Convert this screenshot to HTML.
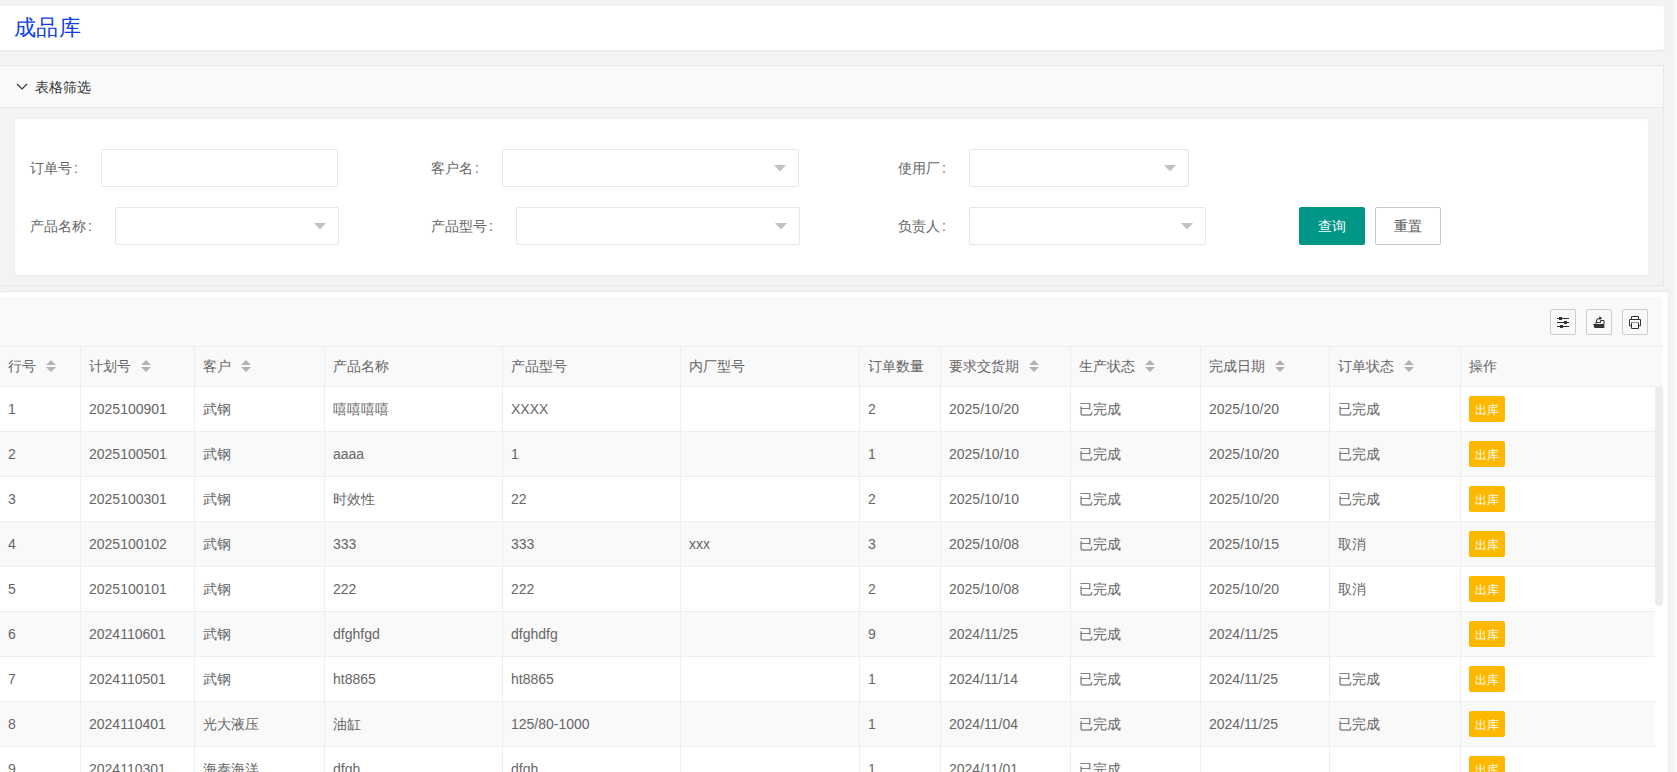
<!DOCTYPE html>
<html><head><meta charset="utf-8">
<style>
*{box-sizing:border-box;margin:0;padding:0}
html,body{width:1677px;height:772px;overflow:hidden}
body{background:#f3f3f3;font-family:"Liberation Sans",sans-serif;font-size:14px;color:#666;position:relative}
.abs{position:absolute}
#hdr{left:0;top:6px;width:1664px;height:44px;background:#fff;border-radius:0 3px 3px 0;box-shadow:0 1px 2px rgba(0,0,0,.06)}
#hdr .t{position:absolute;left:13.5px;top:0;line-height:44px;font-size:22px;letter-spacing:0.6px;color:#0f3ee2}
#fp{left:0;top:65px;width:1664px;height:221px;border:1px solid #e8e8e8;border-left:0;background:#f3f3f3}
#fpt{left:0;top:0;width:1663px;height:42px;background:#f9f9f9;border-bottom:1px solid #e8e8e8}
#fpt .chev{position:absolute;left:16px;top:17px}
#fpt .t{position:absolute;left:35px;top:0;line-height:42px;font-size:14px;color:#333}
#fc{left:15px;top:53px;width:1633px;height:156px;background:#fff;border-radius:3px;box-shadow:0 1px 2px rgba(0,0,0,.05)}
.lbl{position:absolute;font-size:14px;color:#666;line-height:20px}
.inp{position:absolute;height:38px;border:1px solid #e6e6e6;border-radius:2px;background:#fff}
.inp .tri{position:absolute;right:12px;top:15px}
.btn{position:absolute;height:38px;line-height:36px;text-align:center;font-size:14px;border-radius:2px}
#tp{left:0;top:292px;width:1668px;height:490px;background:#fff;border-radius:2px;box-shadow:0 0 0 1px #ebebeb}
#tb{left:0;top:5px;width:1663px;height:49px;background:#f9f9f9}
.tool{position:absolute;top:12px;width:26px;height:26px;border:1px solid #ccc;border-radius:2px;background:#f9f9f9}
.tool svg{position:absolute;left:0;top:0}
.hcell{position:absolute;top:346px;height:41px;line-height:39px;background:#f9f9f9;border-top:1px solid #eee;border-bottom:1px solid #eee;white-space:nowrap;color:#666}
.hcell .sort{position:relative;top:1px;margin-left:10px}
.row{position:absolute;left:0;width:1655px;height:45px;border-bottom:1px solid #eee}
.row.even{background:#f9f9f9}
.vline{position:absolute;width:1px;background:#eee}
.cell{position:absolute;line-height:44px;white-space:nowrap;color:#666}
.colon{margin-left:2px}
.ob{position:absolute;width:36px;height:26px;background:#ffb800;color:#fff;font-size:12px;font-weight:500;line-height:28px;text-align:center;border-radius:2px}
#sb{left:1655px;top:387px;width:8px;height:219px;background:#ececec;border-radius:4px}
#rs1{left:1668px;top:0;width:6px;height:772px;background:#efefef}
#rs2{left:1674px;top:0;width:3px;height:772px;background:#fafafa}
</style></head><body>

<div id="hdr" class="abs"><span class="t">成品库</span></div>
<div id="fp" class="abs"><div id="fpt" class="abs"><svg class="chev" width="12" height="8" viewBox="0 0 12 8"><path d="M1 1L6 6L11 1" stroke="#333" stroke-width="1.2" fill="none"/></svg><span class="t">表格筛选</span></div>
<div id="fc" class="abs">
<span class="lbl" style="left:15px;top:39px">订单号<span class=colon>:</span></span>
<div class="inp" style="left:86px;top:30px;width:237px;height:38px"></div>
<span class="lbl" style="left:416px;top:39px">客户名<span class=colon>:</span></span>
<div class="inp" style="left:487px;top:30px;width:297px;height:38px"><svg class="tri" width="12" height="7" viewBox="0 0 12 7"><path d="M0 0H12L6 6.5Z" fill="#c2c2c2"/></svg></div>
<span class="lbl" style="left:883px;top:39px">使用厂<span class=colon>:</span></span>
<div class="inp" style="left:954px;top:30px;width:220px;height:38px"><svg class="tri" width="12" height="7" viewBox="0 0 12 7"><path d="M0 0H12L6 6.5Z" fill="#c2c2c2"/></svg></div>
<span class="lbl" style="left:15px;top:97px">产品名称<span class=colon>:</span></span>
<div class="inp" style="left:100px;top:88px;width:224px;height:38px"><svg class="tri" width="12" height="7" viewBox="0 0 12 7"><path d="M0 0H12L6 6.5Z" fill="#c2c2c2"/></svg></div>
<span class="lbl" style="left:416px;top:97px">产品型号<span class=colon>:</span></span>
<div class="inp" style="left:501px;top:88px;width:284px;height:38px"><svg class="tri" width="12" height="7" viewBox="0 0 12 7"><path d="M0 0H12L6 6.5Z" fill="#c2c2c2"/></svg></div>
<span class="lbl" style="left:883px;top:97px">负责人<span class=colon>:</span></span>
<div class="inp" style="left:954px;top:88px;width:237px;height:38px"><svg class="tri" width="12" height="7" viewBox="0 0 12 7"><path d="M0 0H12L6 6.5Z" fill="#c2c2c2"/></svg></div>
<div class="btn" style="left:1284px;top:88px;width:66px;background:#009688;color:#fff;line-height:38px">查询</div>
<div class="btn" style="left:1360px;top:88px;width:66px;background:#fff;color:#555;border:1px solid #c9c9c9">重置</div>
</div></div>
<div id="tp" class="abs"><div id="tb" class="abs">
<div class="tool" style="left:1550px"><svg width="24" height="24" viewBox="0 0 24 24"><g stroke="#333" stroke-width="1"><path d="M6 8.5H18M6 12.5H18M6 16.5H18"/></g><g fill="#333"><rect x="8" y="7" width="3" height="3"/><rect x="13" y="11" width="3" height="3"/><rect x="9" y="15" width="3" height="3"/></g></svg></div>
<div class="tool" style="left:1586px"><svg width="24" height="24" viewBox="0 0 24 24"><path d="M6.2 14H17.3V18H7.4Z" fill="#333"/><path d="M8.5 14.2L9 12.5H13.5V10.5H17V14" stroke="#333" stroke-width="1" fill="none"/><path d="M9.2 12.5Q9.5 8.5 12.5 8.3H13" stroke="#333" stroke-width="1.1" fill="none"/><path d="M12.4 6L15.1 8.3L12.4 10.3Z" fill="#333"/></svg></div>
<div class="tool" style="left:1622px"><svg width="24" height="24" viewBox="0 0 24 24"><g stroke="#333" stroke-width="1" fill="none"><path d="M8.5 9V6.5H15.5V9"/><path d="M8.3 15.8H6.5V9.5H17.5V15.8H15.7"/><path d="M8.5 18.5H15.5V12.5"/><path d="M8.5 12.5V18.5"/></g><path d="M8.5 12.5H15.5" stroke="#999" stroke-width="1"/></svg></div>
</div></div>
<div class="hcell" style="left:0px;width:80px;padding-left:8px">行号<svg class="sort" width="10" height="12" viewBox="0 0 10 12"><path d="M5 0L10 5H0Z M0 7H10L5 12Z" fill="#b2b2b2"/></svg></div>
<div class="hcell" style="left:80px;width:114px;padding-left:9px">计划号<svg class="sort" width="10" height="12" viewBox="0 0 10 12"><path d="M5 0L10 5H0Z M0 7H10L5 12Z" fill="#b2b2b2"/></svg></div>
<div class="hcell" style="left:194px;width:130px;padding-left:9px">客户<svg class="sort" width="10" height="12" viewBox="0 0 10 12"><path d="M5 0L10 5H0Z M0 7H10L5 12Z" fill="#b2b2b2"/></svg></div>
<div class="hcell" style="left:324px;width:178px;padding-left:9px">产品名称</div>
<div class="hcell" style="left:502px;width:178px;padding-left:9px">产品型号</div>
<div class="hcell" style="left:680px;width:179px;padding-left:9px">内厂型号</div>
<div class="hcell" style="left:859px;width:81px;padding-left:9px">订单数量</div>
<div class="hcell" style="left:940px;width:130px;padding-left:9px">要求交货期<svg class="sort" width="10" height="12" viewBox="0 0 10 12"><path d="M5 0L10 5H0Z M0 7H10L5 12Z" fill="#b2b2b2"/></svg></div>
<div class="hcell" style="left:1070px;width:130px;padding-left:9px">生产状态<svg class="sort" width="10" height="12" viewBox="0 0 10 12"><path d="M5 0L10 5H0Z M0 7H10L5 12Z" fill="#b2b2b2"/></svg></div>
<div class="hcell" style="left:1200px;width:129px;padding-left:9px">完成日期<svg class="sort" width="10" height="12" viewBox="0 0 10 12"><path d="M5 0L10 5H0Z M0 7H10L5 12Z" fill="#b2b2b2"/></svg></div>
<div class="hcell" style="left:1329px;width:131px;padding-left:9px">订单状态<svg class="sort" width="10" height="12" viewBox="0 0 10 12"><path d="M5 0L10 5H0Z M0 7H10L5 12Z" fill="#b2b2b2"/></svg></div>
<div class="hcell" style="left:1460px;width:203px;padding-left:9px">操作</div>
<div class="row" style="top:387px"></div>
<span class="cell" style="left:8px;top:387px">1</span>
<span class="cell" style="left:89px;top:387px">2025100901</span>
<span class="cell" style="left:203px;top:387px">武钢</span>
<span class="cell" style="left:333px;top:387px">嘻嘻嘻嘻</span>
<span class="cell" style="left:511px;top:387px">XXXX</span>
<span class="cell" style="left:868px;top:387px">2</span>
<span class="cell" style="left:949px;top:387px">2025/10/20</span>
<span class="cell" style="left:1079px;top:387px">已完成</span>
<span class="cell" style="left:1209px;top:387px">2025/10/20</span>
<span class="cell" style="left:1338px;top:387px">已完成</span>
<span class="ob" style="left:1469px;top:396px">出库</span>
<div class="row even" style="top:432px"></div>
<span class="cell" style="left:8px;top:432px">2</span>
<span class="cell" style="left:89px;top:432px">2025100501</span>
<span class="cell" style="left:203px;top:432px">武钢</span>
<span class="cell" style="left:333px;top:432px">aaaa</span>
<span class="cell" style="left:511px;top:432px">1</span>
<span class="cell" style="left:868px;top:432px">1</span>
<span class="cell" style="left:949px;top:432px">2025/10/10</span>
<span class="cell" style="left:1079px;top:432px">已完成</span>
<span class="cell" style="left:1209px;top:432px">2025/10/20</span>
<span class="cell" style="left:1338px;top:432px">已完成</span>
<span class="ob" style="left:1469px;top:441px">出库</span>
<div class="row" style="top:477px"></div>
<span class="cell" style="left:8px;top:477px">3</span>
<span class="cell" style="left:89px;top:477px">2025100301</span>
<span class="cell" style="left:203px;top:477px">武钢</span>
<span class="cell" style="left:333px;top:477px">时效性</span>
<span class="cell" style="left:511px;top:477px">22</span>
<span class="cell" style="left:868px;top:477px">2</span>
<span class="cell" style="left:949px;top:477px">2025/10/10</span>
<span class="cell" style="left:1079px;top:477px">已完成</span>
<span class="cell" style="left:1209px;top:477px">2025/10/20</span>
<span class="cell" style="left:1338px;top:477px">已完成</span>
<span class="ob" style="left:1469px;top:486px">出库</span>
<div class="row even" style="top:522px"></div>
<span class="cell" style="left:8px;top:522px">4</span>
<span class="cell" style="left:89px;top:522px">2025100102</span>
<span class="cell" style="left:203px;top:522px">武钢</span>
<span class="cell" style="left:333px;top:522px">333</span>
<span class="cell" style="left:511px;top:522px">333</span>
<span class="cell" style="left:689px;top:522px">xxx</span>
<span class="cell" style="left:868px;top:522px">3</span>
<span class="cell" style="left:949px;top:522px">2025/10/08</span>
<span class="cell" style="left:1079px;top:522px">已完成</span>
<span class="cell" style="left:1209px;top:522px">2025/10/15</span>
<span class="cell" style="left:1338px;top:522px">取消</span>
<span class="ob" style="left:1469px;top:531px">出库</span>
<div class="row" style="top:567px"></div>
<span class="cell" style="left:8px;top:567px">5</span>
<span class="cell" style="left:89px;top:567px">2025100101</span>
<span class="cell" style="left:203px;top:567px">武钢</span>
<span class="cell" style="left:333px;top:567px">222</span>
<span class="cell" style="left:511px;top:567px">222</span>
<span class="cell" style="left:868px;top:567px">2</span>
<span class="cell" style="left:949px;top:567px">2025/10/08</span>
<span class="cell" style="left:1079px;top:567px">已完成</span>
<span class="cell" style="left:1209px;top:567px">2025/10/20</span>
<span class="cell" style="left:1338px;top:567px">取消</span>
<span class="ob" style="left:1469px;top:576px">出库</span>
<div class="row even" style="top:612px"></div>
<span class="cell" style="left:8px;top:612px">6</span>
<span class="cell" style="left:89px;top:612px">2024110601</span>
<span class="cell" style="left:203px;top:612px">武钢</span>
<span class="cell" style="left:333px;top:612px">dfghfgd</span>
<span class="cell" style="left:511px;top:612px">dfghdfg</span>
<span class="cell" style="left:868px;top:612px">9</span>
<span class="cell" style="left:949px;top:612px">2024/11/25</span>
<span class="cell" style="left:1079px;top:612px">已完成</span>
<span class="cell" style="left:1209px;top:612px">2024/11/25</span>
<span class="ob" style="left:1469px;top:621px">出库</span>
<div class="row" style="top:657px"></div>
<span class="cell" style="left:8px;top:657px">7</span>
<span class="cell" style="left:89px;top:657px">2024110501</span>
<span class="cell" style="left:203px;top:657px">武钢</span>
<span class="cell" style="left:333px;top:657px">ht8865</span>
<span class="cell" style="left:511px;top:657px">ht8865</span>
<span class="cell" style="left:868px;top:657px">1</span>
<span class="cell" style="left:949px;top:657px">2024/11/14</span>
<span class="cell" style="left:1079px;top:657px">已完成</span>
<span class="cell" style="left:1209px;top:657px">2024/11/25</span>
<span class="cell" style="left:1338px;top:657px">已完成</span>
<span class="ob" style="left:1469px;top:666px">出库</span>
<div class="row even" style="top:702px"></div>
<span class="cell" style="left:8px;top:702px">8</span>
<span class="cell" style="left:89px;top:702px">2024110401</span>
<span class="cell" style="left:203px;top:702px">光大液压</span>
<span class="cell" style="left:333px;top:702px">油缸</span>
<span class="cell" style="left:511px;top:702px">125/80-1000</span>
<span class="cell" style="left:868px;top:702px">1</span>
<span class="cell" style="left:949px;top:702px">2024/11/04</span>
<span class="cell" style="left:1079px;top:702px">已完成</span>
<span class="cell" style="left:1209px;top:702px">2024/11/25</span>
<span class="cell" style="left:1338px;top:702px">已完成</span>
<span class="ob" style="left:1469px;top:711px">出库</span>
<div class="row" style="top:747px"></div>
<span class="cell" style="left:8px;top:747px">9</span>
<span class="cell" style="left:89px;top:747px">2024110301</span>
<span class="cell" style="left:203px;top:747px">海泰海洋</span>
<span class="cell" style="left:333px;top:747px">dfgh</span>
<span class="cell" style="left:511px;top:747px">dfgh</span>
<span class="cell" style="left:868px;top:747px">1</span>
<span class="cell" style="left:949px;top:747px">2024/11/01</span>
<span class="cell" style="left:1079px;top:747px">已完成</span>
<span class="ob" style="left:1469px;top:756px">出库</span>
<div class="vline" style="left:80px;top:346px;height:426px"></div>
<div class="vline" style="left:194px;top:346px;height:426px"></div>
<div class="vline" style="left:324px;top:346px;height:426px"></div>
<div class="vline" style="left:502px;top:346px;height:426px"></div>
<div class="vline" style="left:680px;top:346px;height:426px"></div>
<div class="vline" style="left:859px;top:346px;height:426px"></div>
<div class="vline" style="left:940px;top:346px;height:426px"></div>
<div class="vline" style="left:1070px;top:346px;height:426px"></div>
<div class="vline" style="left:1200px;top:346px;height:426px"></div>
<div class="vline" style="left:1329px;top:346px;height:426px"></div>
<div class="vline" style="left:1460px;top:346px;height:426px"></div>
<div id="sb" class="abs"></div><div id="rs2" class="abs"></div>
</body></html>
